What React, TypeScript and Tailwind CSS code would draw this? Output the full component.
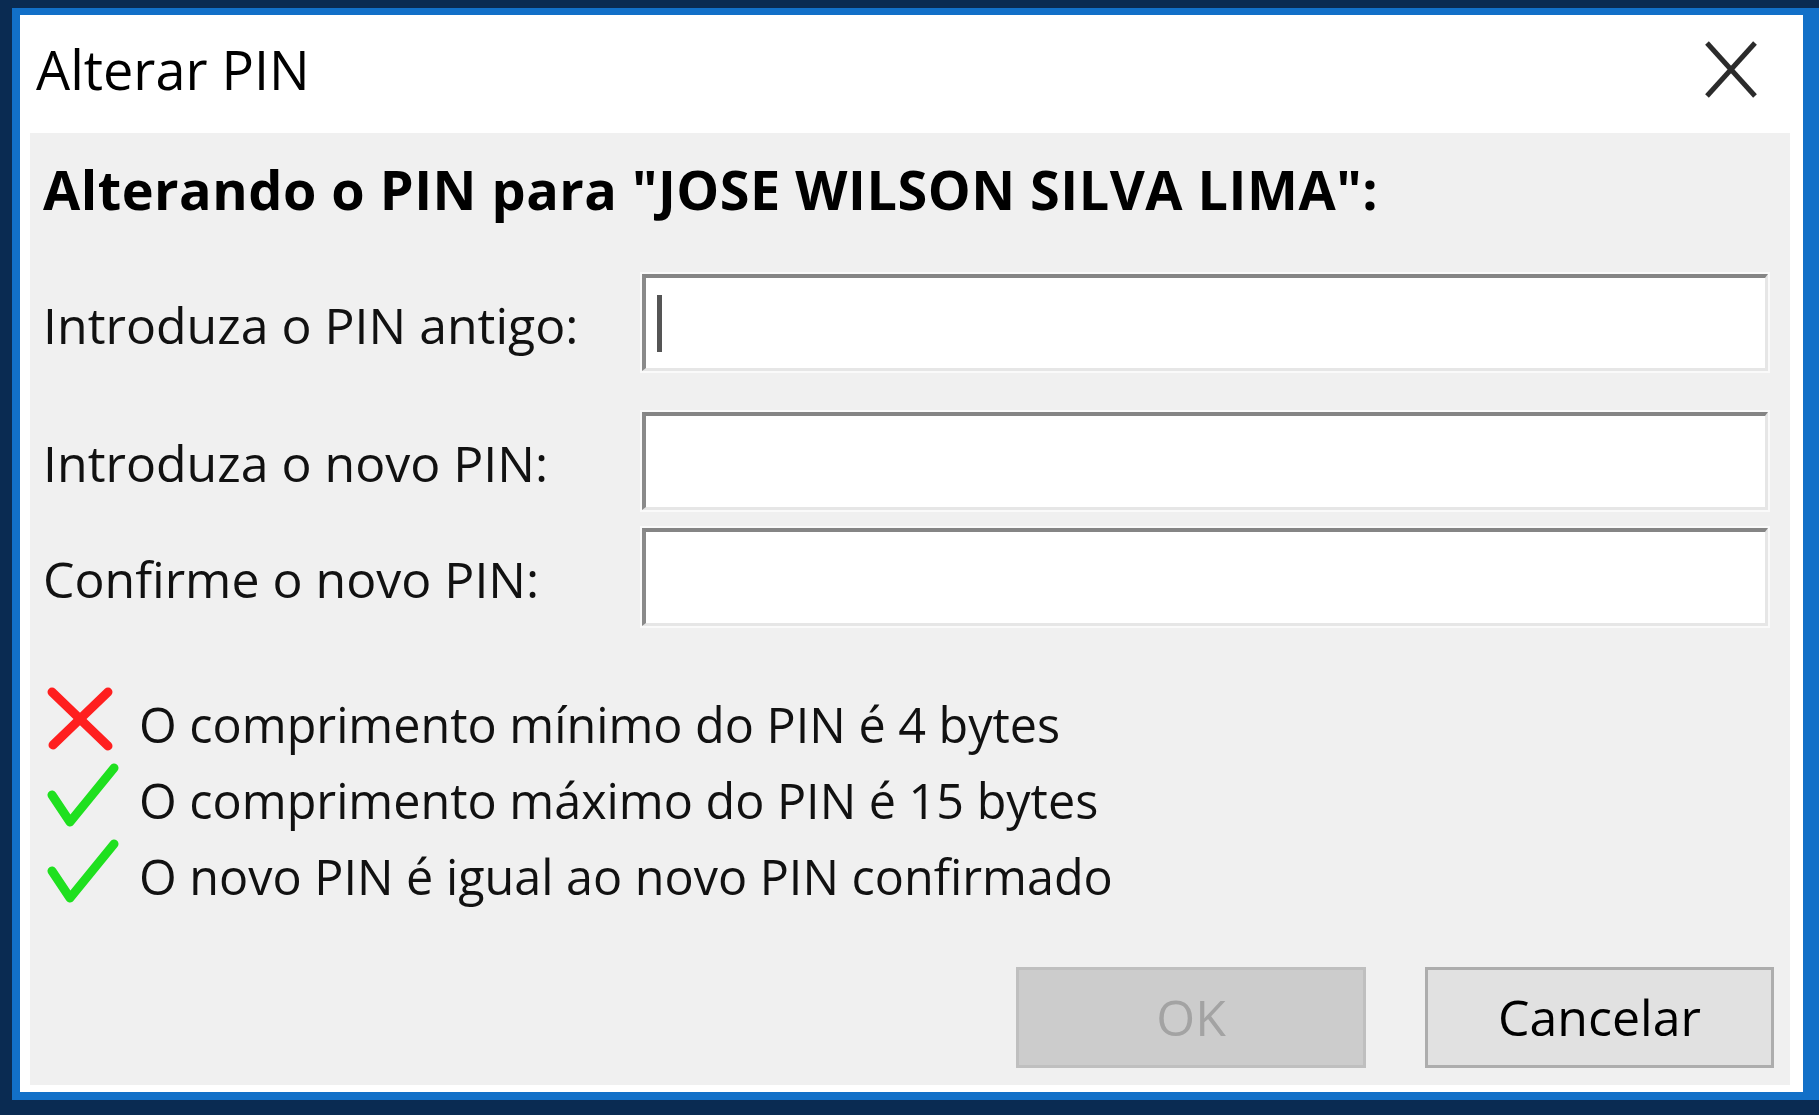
import React from "react";

const rules = [
  { ok: false, text: "O comprimento mínimo do PIN é 4 bytes" },
  { ok: true, text: "O comprimento máximo do PIN é 15 bytes" },
  { ok: true, text: "O novo PIN é igual ao novo PIN confirmado" },
];

const fields = [
  { label: "Introduza o PIN antigo:", gap: "mt-[55px]", h: "h-[97px]", cursor: true },
  { label: "Introduza o novo PIN:", gap: "mt-[41px]", h: "h-[98px]", cursor: false },
  { label: "Confirme o novo PIN:", gap: "mt-[18px]", h: "h-[98px]", cursor: false },
];

const StatusIcon = ({ ok }: { ok: boolean }) =>
  ok ? (
    <svg width="96" height="76" viewBox="0 0 96 76">
      <polyline
        points="9,33 27,60 71,6"
        fill="none"
        stroke="#1fe01f"
        strokeWidth="9"
        strokeLinecap="round"
        strokeLinejoin="round"
      />
    </svg>
  ) : (
    <svg width="96" height="76" viewBox="0 0 96 76">
      <g stroke="#ff1f1f" strokeWidth="9" strokeLinecap="round">
        <line x1="9" y1="6" x2="65" y2="60" />
        <line x1="65" y1="6" x2="10" y2="59" />
      </g>
    </svg>
  );

export default function App() {
  return (
    <div
      className="w-[1819px] h-[1115px] bg-[#0a2b52] pl-[12px] pt-[8px] pb-[15px] flex overflow-hidden"
      style={{ fontFamily: '"Open Sans", "Noto Sans", sans-serif' }}
    >
      <div className="flex-1 flex flex-col bg-white border-l-[8px] border-t-[7px] border-b-[8px] border-r-[16px] border-[#1270c8]">
        {/* title bar */}
        <div className="h-[118px] flex items-center justify-between pl-[16px] pr-[46px] pb-[10px]">
          <span className="text-[54px] leading-[60px] text-black">Alterar PIN</span>
          <svg width="52" height="57" viewBox="0 0 52 57">
            <g stroke="#2b2b2b" strokeWidth="5">
              <line x1="2" y1="2" x2="50" y2="55" />
              <line x1="50" y1="2" x2="2" y2="55" />
            </g>
          </svg>
        </div>

        {/* content */}
        <div className="flex-1 ml-[10px] mr-[13px] mb-[7px] bg-[#f0f0f0] flex flex-col pl-[13px] pr-[22px] pb-[17px]">
          <div className="mt-[26px] text-[54px] leading-[60px] font-bold tracking-[0.5px] text-black whitespace-nowrap">
            Alterando o PIN para "JOSE WILSON SILVA LIMA":
          </div>

          {fields.map((f) => (
            <div key={f.label} className={`${f.gap} flex items-center`}>
              <div className="w-[599px] text-[50px] leading-[60px] text-[#111] whitespace-nowrap pt-[4px]">
                {f.label}
              </div>
              <div className={`flex-1 ${f.h} bg-white border-t-[4px] border-l-[4px] border-r-[3px] border-b-[3px] border-t-[#858585] border-l-[#8a8a8a] border-r-[#e6e6e6] border-b-[#e6e6e6] shadow-[0_0_0_2px_#fafafa] flex items-center pl-[11px]`}>
                {f.cursor && <div className="w-[5px] h-[57px] bg-[#555]" />}
              </div>
            </div>
          ))}

          <div className="mt-[60px] flex flex-col">
            {rules.map((r) => (
              <div key={r.text} className="h-[76px] flex items-center">
                <StatusIcon ok={r.ok} />
                <span className="text-[48.5px] leading-[60px] text-[#111] whitespace-nowrap">{r.text}</span>
              </div>
            ))}
          </div>

          <div className="mt-auto flex justify-end gap-[59px] mr-[-6px]">
            <div className="w-[350px] h-[101px] bg-[#cccccc] border-[3px] border-[#bfbfbf] flex items-center justify-center text-[50px] text-[#a3a3a3]">
              OK
            </div>
            <div className="w-[349px] h-[101px] bg-[#e1e1e1] border-[3px] border-[#adadad] flex items-center justify-center text-[50px] text-black">
              Cancelar
            </div>
          </div>
        </div>
      </div>
    </div>
  );
}
